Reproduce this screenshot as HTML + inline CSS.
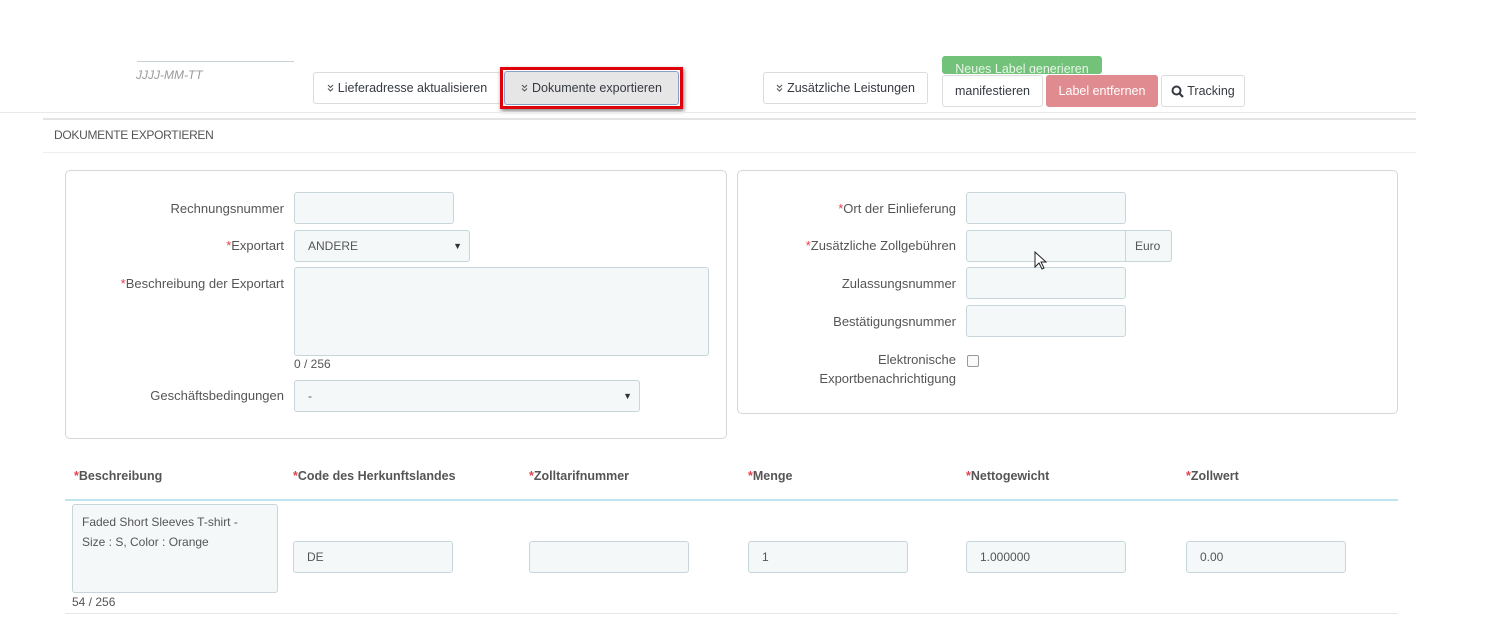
<!DOCTYPE html>
<html><head><meta charset="utf-8"><style>
*{box-sizing:border-box;margin:0;padding:0}
body{width:1505px;height:631px;background:#fff;position:relative;overflow:hidden;font-family:"Liberation Sans","DejaVu Sans",sans-serif;color:#555;font-size:13px}
.a{position:absolute}
.btn{position:absolute;border:1px solid #dcdcdc;border-radius:3px;background:#fff;font-size:12.5px;color:#363a41;display:flex;align-items:center;justify-content:center;white-space:nowrap}
.in{position:absolute;background:#f5f8f9;border:1px solid #c7d6db;border-radius:3px;font-size:12px;color:#555;padding-left:13px;display:flex;align-items:center}
.lbl{position:absolute;text-align:right;font-size:13px;color:#555;white-space:nowrap}
.r{color:#e3414b}
.panel{position:absolute;border:1px solid #d3d8db;border-radius:5px;background:#fff}
.th{position:absolute;top:469px;font-weight:bold;font-size:12.5px;color:#555}
.sel::after{content:"▼";position:absolute;right:7px;font-size:9px;color:#333}
.ch{margin-right:4px}
</style></head><body>
<div class="a" style="left:137px;top:61px;width:157px;height:1px;background:#c7d2d8"></div>
<div class="a" style="left:136px;top:68px;font-size:12px;font-style:italic;color:#999">JJJJ-MM-TT</div>

<div class="btn" style="left:313px;top:72px;width:188px;height:32px"><svg class="ch" width="7" height="8" viewBox="0 0 7 8"><path d="M1 1l2.5 2.5L6 1M1 4.5l2.5 2.5L6 4.5" fill="none" stroke="#555" stroke-width="1.1"/></svg>Lieferadresse aktualisieren</div>
<div class="a" style="left:500px;top:67px;width:183px;height:42px;border:3px solid #e0000b;box-shadow:1px 2px 4px rgba(0,0,0,.5)"></div>
<div class="btn" style="left:504px;top:71px;width:175px;height:34px;background:#e6e6e6;border-color:#8aa0c0"><svg class="ch" width="7" height="8" viewBox="0 0 7 8"><path d="M1 1l2.5 2.5L6 1M1 4.5l2.5 2.5L6 4.5" fill="none" stroke="#555" stroke-width="1.1"/></svg>Dokumente exportieren</div>
<div class="btn" style="left:763px;top:72px;width:165px;height:32px"><svg class="ch" width="7" height="8" viewBox="0 0 7 8"><path d="M1 1l2.5 2.5L6 1M1 4.5l2.5 2.5L6 4.5" fill="none" stroke="#555" stroke-width="1.1"/></svg>Zusätzliche Leistungen</div>
<div class="btn" style="left:942px;top:56px;width:160px;height:18px;background:#72c279;border-color:#72c279;color:#e8f5e9;align-items:flex-end;overflow:hidden"><span style="position:relative;top:3px">Neues Label generieren</span></div>
<div class="btn" style="left:942px;top:75px;width:101px;height:32px">manifestieren</div>
<div class="btn" style="left:1046px;top:75px;width:112px;height:32px;background:#e08b90;border-color:#e08b90;color:#fff">Label entfernen</div>
<div class="btn" style="left:1161px;top:75px;width:84px;height:32px"><svg width="13" height="13" viewBox="0 0 13 13" style="margin-right:3px"><circle cx="5.5" cy="5.5" r="4" fill="none" stroke="#363a41" stroke-width="2"/><path d="M8.5 8.5l3.5 3.5" stroke="#363a41" stroke-width="2.2"/></svg>Tracking</div>

<div class="a" style="left:0;top:112px;width:1416px;height:1px;background:#eaeaea"></div>
<div class="a" style="left:43px;top:118px;width:1373px;height:2px;background:#e4e4e4"></div>
<div class="a" style="left:54px;top:128px;font-size:12px;color:#555;letter-spacing:-.3px">DOKUMENTE EXPORTIEREN</div>
<div class="a" style="left:43px;top:152px;width:1373px;height:1px;background:#eee"></div>

<div class="panel" style="left:65px;top:170px;width:662px;height:269px"></div>
<div class="lbl" style="right:1221px;top:201px">Rechnungsnummer</div>
<div class="in" style="left:294px;top:192px;width:160px;height:32px"></div>
<div class="lbl" style="right:1221px;top:238px"><span class="r">*</span>Exportart</div>
<div class="in sel" style="left:294px;top:230px;width:176px;height:32px">ANDERE</div>
<div class="lbl" style="right:1221px;top:276px"><span class="r">*</span>Beschreibung der Exportart</div>
<div class="in" style="left:294px;top:267px;width:415px;height:89px"></div>
<div class="a" style="left:294px;top:357px;font-size:12px">0 / 256</div>
<div class="lbl" style="right:1221px;top:388px">Geschäftsbedingungen</div>
<div class="in sel" style="left:294px;top:380px;width:346px;height:32px">-</div>

<div class="panel" style="left:737px;top:170px;width:661px;height:244px"></div>
<div class="lbl" style="right:549px;top:201px"><span class="r">*</span>Ort der Einlieferung</div>
<div class="in" style="left:966px;top:192px;width:160px;height:32px"></div>
<div class="lbl" style="right:549px;top:238px"><span class="r">*</span>Zusätzliche Zollgebühren</div>
<div class="in" style="left:966px;top:230px;width:160px;height:32px;border-radius:3px 0 0 3px"></div>
<div class="in" style="left:1125px;top:230px;width:47px;height:32px;padding-left:9px;border-radius:0 3px 3px 0">Euro</div>
<div class="lbl" style="right:549px;top:276px">Zulassungsnummer</div>
<div class="in" style="left:966px;top:267px;width:160px;height:32px"></div>
<div class="lbl" style="right:549px;top:314px">Bestätigungsnummer</div>
<div class="in" style="left:966px;top:305px;width:160px;height:32px"></div>
<div class="lbl" style="right:549px;top:350px;line-height:19px">Elektronische<br>Exportbenachrichtigung</div>
<div class="a" style="left:967px;top:355px;width:12px;height:12px;border:1px solid #999;border-radius:2px;background:#fafafa"></div>
<svg class="a" style="left:1034px;top:251px" width="14" height="20" viewBox="0 0 14 20"><path d="M1 1v15l4-4 3 6 2-1-3-6h5z" fill="#fff" stroke="#222" stroke-width="1"/></svg>

<div class="th" style="left:74px"><span class="r">*</span>Beschreibung</div>
<div class="th" style="left:293px"><span class="r">*</span>Code des Herkunftslandes</div>
<div class="th" style="left:529px"><span class="r">*</span>Zolltarifnummer</div>
<div class="th" style="left:748px"><span class="r">*</span>Menge</div>
<div class="th" style="left:966px"><span class="r">*</span>Nettogewicht</div>
<div class="th" style="left:1186px"><span class="r">*</span>Zollwert</div>
<div class="a" style="left:65px;top:499px;width:1333px;height:2px;background:#bfe3ef"></div>
<div class="in" style="left:72px;top:504px;width:206px;height:89px;align-items:flex-start;padding:7px 20px 7px 9px;line-height:20px">Faded Short Sleeves T-shirt - Size : S, Color : Orange</div>
<div class="a" style="left:72px;top:595px;font-size:12px">54 / 256</div>
<div class="in" style="left:293px;top:541px;width:160px;height:32px">DE</div>
<div class="in" style="left:529px;top:541px;width:160px;height:32px"></div>
<div class="in" style="left:748px;top:541px;width:160px;height:32px">1</div>
<div class="in" style="left:966px;top:541px;width:160px;height:32px">1.000000</div>
<div class="in" style="left:1186px;top:541px;width:160px;height:32px">0.00</div>
<div class="a" style="left:65px;top:613px;width:1333px;height:1px;background:#e6e6e6"></div>
</body></html>
